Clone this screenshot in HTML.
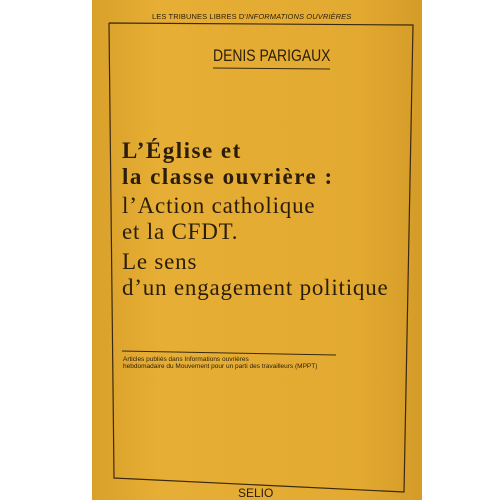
<!DOCTYPE html>
<html><head><style>
body{margin:0;width:500px;height:500px;background:#fff;position:relative;overflow:hidden;font-family:"Liberation Sans",sans-serif}
.book{position:absolute;left:92px;top:0;width:330px;height:500px;background:linear-gradient(90deg,#d9a02a,#e6ae34 20%,#e3aa31 80%,#d49b28)}
.t{position:absolute;color:#2a1d0c;white-space:nowrap}
.s{font-family:"Liberation Serif",serif;font-size:23px;line-height:26px;letter-spacing:.8px}
.b{font-weight:bold;letter-spacing:1.5px}
</style></head><body>
<div class="book"></div>
<div class="t" style="left:152px;top:12px;font-size:7.5px;letter-spacing:.1px">LES TRIBUNES LIBRES D'<i>INFORMATIONS OUVRIÈRES</i></div>
<svg style="position:absolute;left:0;top:0" width="500" height="500"><polyline points="109,23 413,25 404,492 114,478 109,23" fill="none" stroke="#3a2810" stroke-width="1.2"/>
<line x1="213" y1="68" x2="330" y2="69" stroke="#3a2810" stroke-width="1"/>
<line x1="122" y1="351" x2="336" y2="355" stroke="#3a2810" stroke-width="1"/></svg>
<div class="t" style="left:213px;top:46px;font-size:17px;transform:scaleX(.82);transform-origin:left">DENIS PARIGAUX</div>
<div class="t s b" style="left:122px;top:138px">L’Église et</div>
<div class="t s b" style="left:122px;top:164px">la classe ouvrière :</div>
<div class="t s" style="left:122px;top:193px">l’Action catholique</div>
<div class="t s" style="left:122px;top:219px">et la CFDT.</div>
<div class="t s" style="left:122px;top:249px">Le sens</div>
<div class="t s" style="left:122px;top:275px">d’un engagement politique</div>
<div class="t" style="left:123px;top:356px;font-size:6.5px;line-height:7px">Articles publiés dans Informations ouvrières<br>hebdomadaire du Mouvement pour un parti des travailleurs (MPPT)</div>
<div class="t" style="left:238px;top:486px;font-size:12px">SELIO</div>
</body></html>
